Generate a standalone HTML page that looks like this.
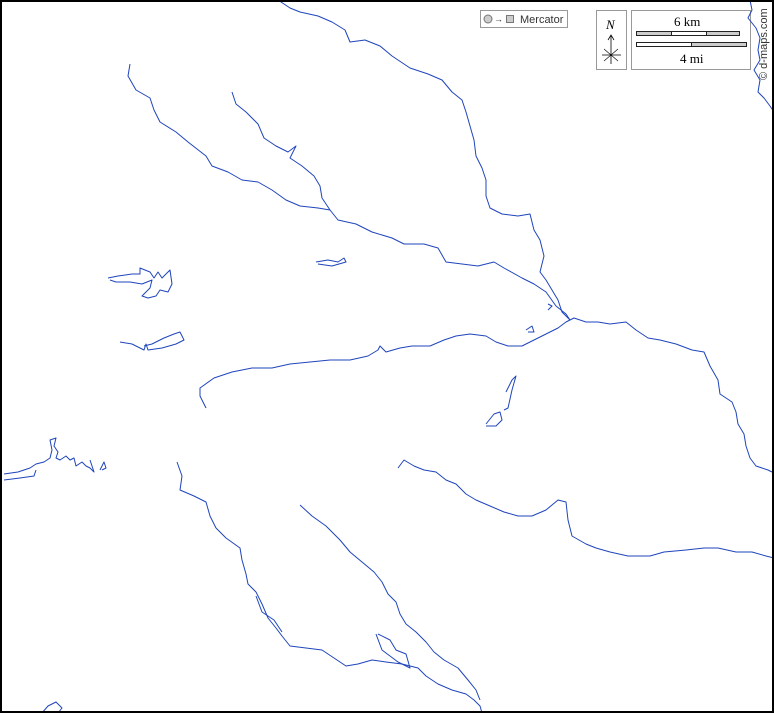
<!DOCTYPE html>
<html><head><style>
html,body{margin:0;padding:0;background:#fff}
#m{position:relative;width:774px;height:713px;overflow:hidden;background:#fff}
svg{position:absolute;left:0;top:0}
.t{font-family:"Liberation Serif",serif;font-size:13px;fill:#000}
</style></head><body><div id="m">
<svg width="774" height="713" viewBox="0 0 774 713">
<!-- legend boxes (under rivers) -->
<rect x="480.5" y="10.5" width="87" height="17" fill="#fff" stroke="#999"/>
<circle cx="488" cy="19" r="4" fill="#ccc" stroke="#777"/>
<text x="494" y="22" font-family="Liberation Sans,sans-serif" font-size="9" fill="#333">→</text>
<rect x="506.5" y="15.5" width="7" height="7" fill="#ccc" stroke="#777"/>
<text x="520" y="23" font-family="Liberation Sans,sans-serif" font-size="11" fill="#333">Mercator</text>
<rect x="596.5" y="10.5" width="30" height="59" fill="#fff" stroke="#999"/>
<text x="606" y="29" class="t" font-style="italic">N</text>
<line x1="611" y1="36" x2="611" y2="64" stroke="#000" stroke-width="0.8"/>
<polyline points="608,40 611,35 614,40" fill="none" stroke="#000" stroke-width="0.8"/>
<line x1="602" y1="55" x2="621" y2="55" stroke="#000" stroke-width="0.8"/>
<line x1="604" y1="49" x2="618" y2="61" stroke="#000" stroke-width="0.6"/>
<line x1="618" y1="49" x2="604" y2="61" stroke="#000" stroke-width="0.6"/>
<rect x="631.5" y="10.5" width="119" height="59" fill="#fff" stroke="#999"/>
<text x="674" y="26" class="t">6 km</text>
<rect x="636.5" y="31.5" width="35" height="4" fill="#ccc" stroke="#222" stroke-width="1"/>
<rect x="671.5" y="31.5" width="35" height="4" fill="#fff" stroke="#222" stroke-width="1"/>
<rect x="706.5" y="31.5" width="33" height="4" fill="#ccc" stroke="#222" stroke-width="1"/>
<rect x="636.5" y="42.5" width="55" height="4" fill="#fff" stroke="#222" stroke-width="1"/>
<rect x="691.5" y="42.5" width="55" height="4" fill="#ccc" stroke="#222" stroke-width="1"/>
<text x="680" y="63" class="t">4 mi</text>
<g fill="none" stroke="#1f45bb" stroke-width="1" stroke-linejoin="round">
<polyline points="278,0 290,8 300,12 318,16 332,22 345,30 350,42 365,40 380,46 392,56 410,68 428,74 442,80 452,92 462,100 466,112 470,126 474,140 476,156 482,168 486,180 486,196 490,208 502,214 518,216 530,214 534,230 540,240 544,256 540,272 546,280 552,290 558,300 562,312 570,320"/>
<polyline points="130,64 128,76 136,90 150,98 154,110 160,122 176,132 188,142 206,156 212,166 228,172 242,180 258,182 272,190 286,200 300,206 318,208 330,210 338,220 356,224 372,232 392,238 404,244 424,244 438,248 446,262 462,264 478,266 494,262 504,268 522,278 534,284 546,292 556,306 566,314 570,320"/>
<polyline points="232,92 236,104 246,112 258,124 264,138 276,146 288,152 296,146 290,158 302,166 314,176 320,186 322,198 330,210"/>
<polyline points="206,408 200,396 200,388 214,378 232,372 252,368 272,368 290,364 310,362 330,360 350,360 368,356 378,350 380,346 386,352 400,348 412,346 430,346 444,340 456,336 470,334 486,336 496,342 508,346 522,346 534,340 546,334 558,328 566,322 574,318 586,322 598,322 610,324 626,322 636,330 648,338 660,340 676,344 692,350 704,352 710,366 718,380 720,394 732,402 736,412 738,424 744,434 746,446 750,458 756,466 768,470 772,472"/>
<polyline points="398,468 404,460 414,466 424,470 436,472 446,480 456,484 466,494 476,500 490,506 504,512 518,516 532,516 546,510 558,500 566,502 568,520 572,536 586,544 596,548 610,552 628,556 650,556 664,552 686,550 704,548 718,548 736,552 752,552 766,556 774,558"/>
<polyline points="177,462 182,476 180,490 194,496 206,502 210,516 216,528 226,538 240,548 242,560 246,574 248,584 256,592 262,604 268,618 276,628 282,636 290,646 306,648 322,650 334,658 346,666 358,664 372,660 386,662 402,664 418,668 426,676 438,684 452,690 466,694 474,700 480,706 482,713"/>
<polyline points="300,505 312,516 326,526 340,540 350,552 362,562 374,572 382,582 388,594 396,602 400,614 406,624 416,632 426,642 434,652 444,660 458,668 468,680 476,690 480,700"/>
<polyline points="376,634 382,650 398,662 410,668 406,654 396,650 390,640 378,634"/>
<polyline points="256,596 262,612 274,620 282,632"/>
<polyline points="750,0 752,10 748,18 756,28 760,38 758,50 760,60 754,70 760,80 758,92 764,98 770,106 774,112"/>
<polyline points="108,278 118,276 132,274 140,274 140,268 150,272 154,278 158,272 162,278 170,270 172,284 168,292 160,290 156,296 148,298 142,296 150,288 152,280 142,284 130,282 116,282 110,280"/>
<polyline points="120,342 132,344 140,348 144,350 146,344 148,350 162,348 176,344 184,340 180,332 174,334 164,338 152,344 144,346"/>
<polyline points="316,262 328,260 338,262 344,258 346,262 332,266 318,264"/>
<polyline points="4,474 18,472 30,468 36,464 44,462 50,458 52,450 50,440 56,438 54,446 58,452 56,458 60,460 66,456 70,460 74,458 76,466 82,462 86,466 90,468 94,472 92,466 90,460"/>
<polyline points="4,480 20,478 34,476 36,470"/>
<polyline points="100,470 104,462 106,468 102,470"/>
<polyline points="486,424 494,414 500,412 502,420 496,426 486,426"/>
<polyline points="506,392 512,380 516,376 512,390 508,408 504,410"/>
<polyline points="526,330 532,326 534,332 528,332"/>
<polyline points="548,304 552,306 548,310"/>
<polyline points="42,713 48,706 56,702 62,708 58,713"/>
</g>
<text transform="translate(767,80) rotate(-90)" font-family="Liberation Sans,sans-serif" font-size="11" fill="#333">© d-maps.com</text>
<rect x="1" y="1" width="772" height="711" fill="none" stroke="#000" stroke-width="2"/>
</svg>
</div></body></html>
